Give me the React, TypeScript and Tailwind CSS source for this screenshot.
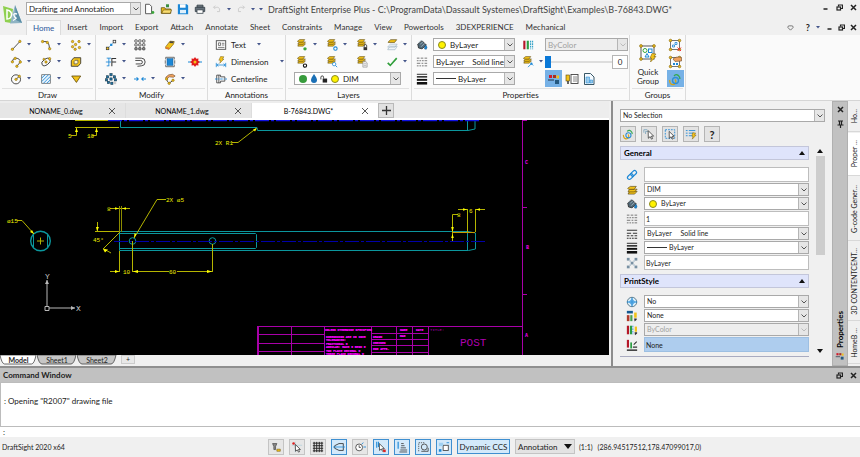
import { useState, type ReactNode } from "react";
import clsx from "clsx";

const Y = "#f2c21a";
const D = "#333333";
const B = "#1b87d6";

function Dot({ x, y, r = 1.4 }: { x: number; y: number; r?: number }) {
  return <circle cx={x} cy={y} r={r} fill={Y} stroke="#7a5c08" strokeWidth={0.6} />;
}

function Layers({ s = 1 }: { s?: number }) {
  return (
    <g transform={`scale(${s})`} fill={Y} stroke="#4b3a08" strokeWidth={0.7}>
      <path d="M3 8.2 5 6.6h8l-3 3.2H2.5z" />
      <path d="M3 5.6 5 4h8l-3 3.2H2.5z" />
      <path d="M2 3 5 .8h7L9.5 4.2H3z" />
    </g>
  );
}

function Nodes({ children }: { children?: ReactNode }) {
  return (
    <g>
      <rect x={2.5} y={2.5} width={9} height={9} fill="none" stroke="#555" strokeWidth={0.8} />
      <Dot x={2.5} y={2.5} r={1.3} /><Dot x={11.5} y={2.5} r={1.3} />
      <Dot x={2.5} y={11.5} r={1.3} /><Dot x={11.5} y={11.5} r={1.3} />
      {children}
    </g>
  );
}

const icons: Record<string, ReactNode> = {
  line: <><path d="M3 12 11.5 3" stroke={D} /><Dot x={2.8} y={12} /><Dot x={11.5} y={2.8} /></>,
  arc: <><path d="M3 3h4q4 1 4 8.5" fill="none" stroke={D} /><Dot x={3} y={3} /><Dot x={8.5} y={4} /><Dot x={11.3} y={11.4} /></>,
  points: <><Dot x={3} y={3} /><Dot x={10.5} y={3} /><Dot x={6.5} y={6.4} /><Dot x={3} y={9} /><Dot x={11} y={10} /><Dot x={6} y={12} /></>,
  polyarc: <><path d="M2.5 7Q3 2.5 7 2.5 12 3 12 7L8 12" fill="none" stroke={D} /><Dot x={2.8} y={6.8} /><Dot x={6} y={2.8} /><Dot x={12} y={7} /><Dot x={8} y={12} /></>,
  ellipse: <><ellipse cx={7} cy={7} rx={5.5} ry={3.4} transform="rotate(-35 7 7)" fill="none" stroke={D} /><Dot x={7} y={7} /><Dot x={11.2} y={3.2} /><Dot x={4.6} y={3.8} r={1.2} /></>,
  region: <><path d="M4.5 2H12.500v6.500L9.500 12H1.500V5.500z" fill={Y} stroke={D} strokeWidth={1} /><path d="M6 5h3.200v2.600L8 9.200H4.800V6.400z" fill="#fff4c4" stroke={D} strokeWidth={0.7} /></>,
  circle: <><circle cx={7} cy={7.4} r={5.3} fill="none" stroke={D} /><path d="m7 7.4 3.5-3.2" stroke={D} /><Dot x={7} y={7.4} /><Dot x={10.8} y={3.8} /></>,
  hatch: <><rect x={2} y={2} width={10} height={10} fill="#e8f4fd" stroke="#555" strokeWidth={0.8} /><path d="m2 6 4-4M2 10l8-8M4 12l8-8M8 12l4-4" stroke={B} /></>,
  triangle: <path d="M2 3.5h10.5L7.5 11z" fill={Y} stroke="#574205" strokeWidth={0.9} />,

  copyPt: <><path d="m3 11 7.5-7.5" stroke={B} strokeDasharray="2 1" /><rect x={1.5} y={9.5} width={3} height={3} fill={Y} stroke={D} strokeWidth={0.8} /><rect x={9.5} y={1.5} width={3} height={3} fill="#fff" stroke={D} strokeWidth={0.9} /><rect x={6} y={5.5} width={2.6} height={2.6} fill={B} /></>,
  array: <g fill="none" stroke="#444" strokeWidth={1}>{[1, 5.5, 10].map((y) => [1, 5.5, 10].map((x) => <rect key={`${x}-${y}`} x={x} y={y} width={2.7} height={2.7} rx={0.5} fill={y === 10 ? "#999" : "none"} />))}</g>,
  erase: <><path d="m2 9 5-6.5 5 .5-1 3-5 6-4-1z" fill={Y} stroke="#6b5209" strokeWidth={0.7} /><path d="m2 9.2 4 .6v2.4l-4-1.2z" fill="#e07a2b" /><path d="m7 2.5 4.5.5-1 2-4.2-.4z" fill="#444" /></>,
  trim: <><path d="M2 2.5h5M4.5 2.5v9M2 11.5h3M1 7h6" stroke={B} fill="none" /><path d="M8 12V3h5M8 7h5" fill="none" stroke={D} strokeWidth={1.2} /></>,
  offset: <path d="M1.500 2.500h7a4 4 0 0 1 0 9L4 12M1.500 5.200h6.300a1.800 1.800 0 0 1 0 4L2 9.300" fill="none" stroke="#444" strokeWidth={1.1} />,
  solid: <><rect x={3.5} y={3} width={7} height={8} fill={B} stroke="#1b5d92" strokeWidth={0.6} /><path d="M2 4V1.5h10V4M2 10v2.5h10V10M1.5 5v4M12.5 5v4" fill="none" stroke="#4a4a4a" strokeWidth={0.9} /></>,
  explode: <><path d="M0 7h3M11 7h3" stroke={B} strokeWidth={1.2} /><path d="m7 2 1.2 1.8 2.3-.3-.3 2.3L12 7l-1.8 1.2.3 2.3-2.3-.3L7 12l-1.2-1.8-2.3.3.3-2.3L2 7l1.8-1.2-.3-2.3 2.3.3z" fill="#e21a1a" /><circle cx={7} cy={7} r={1.5} fill={Y} /></>,
  pattern: <g fill="#2277a8" stroke="#17384c" strokeWidth={0.7}>{[[7, 2], [3, 4.5], [11, 4.5], [1.8, 8], [12.2, 8], [4, 11], [8, 12], [7, 7]].map(([x, y]) => <rect key={`${x}-${y}`} x={x - 1.3} y={y - 1.3} width={2.6} height={2.6} />)}<rect x={10} y={10} width={3} height={3} fill="#ccc" stroke="none" /></g>,
  stretch: <path d="M0 7h5M3 5l2 2-2 2M14 7H9M11 5 9 7l2 2" fill="none" stroke={B} strokeWidth={1.2} />,
  editPl: <><path d="M2 5Q5 1 10 1.5l3 2-2 1.5-5-.5L3.5 7z" fill="#f0a15e" stroke="#6b4a28" strokeWidth={0.7} /><path d="M3 6q0 4 3 6M6 12l4-3" fill="none" stroke={D} /><Dot x={3} y={7} /><Dot x={6} y={12} /><Dot x={10.5} y={8.5} /></>,

  text: <><rect x={1.5} y={2} width={11} height={10} fill="#fff" stroke="#444" strokeWidth={1} /><path d="M4 4.500h2.500v3H4zM8 5h3M8 7h3M3.500 9.800h7.500" fill="none" stroke="#444" strokeWidth={0.8} /></>,
  dim: <><path d="M1.5 8v5M12.5 8v5M2 10.5h10M4 9l-2 1.5L4 12M10 9l2 1.5L10 12" fill="none" stroke={B} strokeWidth={0.9} /><path d="m6.5.5 4 .5-2 2.500h2L5.500 8.500l1-3.500H4.500z" fill={Y} stroke="#6b5209" strokeWidth={0.5} /></>,
  center: <><path d="M2 2.5h4.500v2h5v5h-5v2H2zM4.500 2.500v9" fill="none" stroke="#444" strokeWidth={1} /><path d="M0 7h14" stroke={B} strokeDasharray="3 1 1 1" /></>,

  layOn: <><Layers s={0.85} /><circle cx={10.5} cy={11.5} r={2} fill="#3aa63a" /></>,
  layFreeze: <><Layers s={0.85} /><circle cx={11} cy={11.2} r={2} fill="#fff" stroke={B} strokeWidth={1.2} /></>,
  layLock: <><Layers s={0.85} /><path d="M9.5 9.5V8a1.5 1.5 0 0 1 3 0v1.5" fill="none" stroke={D} /><rect x={8.8} y={9.5} width={4.2} height={3.5} fill={D} /></>,
  layTop: <><g transform="translate(0 5)" opacity={0.55}><path d="M3 5.5 5 3.5h8l-2.5 4H2zM3 3 5 1h8l-2.5 3.5H2z" fill="#e7f0f7" stroke="#4b7594" strokeWidth={0.7} /></g><path d="M3 3 5.5.8h7L10 4H2.5z" fill={Y} stroke="#4b3a08" strokeWidth={0.7} /></>,
  layOff: <><Layers s={0.85} /><circle cx={10.5} cy={11.2} r={1.9} fill="#fff" stroke="#111" strokeWidth={1.3} /></>,
  layFind: <><Layers s={0.85} /><circle cx={9.5} cy={9.5} r={2} fill="#fff" stroke={B} strokeWidth={0.9} /><path d="m11 11 2 2" stroke={B} /></>,
  layDoc: <><Layers s={0.85} /><path d="M8 6.5h3.5L13 8v5H8z" fill="#eee" stroke="#888" strokeWidth={0.7} /><path d="M9 9h3M9 11h3" stroke="#999" strokeWidth={0.6} /></>,
  check: <path d="m2 8 3 3 7.5-8.5" fill="none" stroke="#2f9e3a" strokeWidth={1.9} />,
  layCur: <><Layers s={0.85} /><path d="m7 13 4-4 2 2" fill="none" stroke={B} /><circle cx={11} cy={9} r={1.3} fill={B} /></>,
  layers: <g transform="translate(0 2)"><Layers /></g>,

  paint: <><path d="M2 6 7 2l5 5-5 4.5-4-1z" fill="#516876" stroke="#222" strokeWidth={0.9} /><path d="M3 5Q4 1 7.5 2M5 6l3-2.5M6 9l4-4" fill="none" stroke="#b9cdd9" strokeWidth={0.8} /><path d="M11.5 7q2.500 3 .5 5-3 .5-2-2.500z" fill={B} stroke="#174f77" strokeWidth={0.5} /></>,
  dashes: <path d="M1 2.5h3M5.5 2.5h3M10 2.5h3M1 5.5h2M4 5.5h2M7 5.5h2M10 5.5h3M1 8.5h4M6.5 8.5h2M10 8.5h3M1 11.5h2M4 11.5h2M7 11.5h2M10 11.5h3" stroke="#666" strokeWidth={1} />,
  linetype: <path d="M1 2.5h12M1 6h5M8 6h5M1 9h3M5.5 9h3M10 9h3M1 12h2M4 12h2M7 12h2M10 12h3" stroke="#333" strokeWidth={1.2} />,
  weights: <><path d="M1 1.500h12" stroke="#111" strokeWidth={1} /><path d="M1 4.500h12" stroke="#111" strokeWidth={1.600} /><path d="M1 8h12" stroke="#111" strokeWidth={2.200} /><path d="M1 12h12" stroke="#111" strokeWidth={3} /></>,
  transp: <g fill="#7890a3">{[[1, 1], [10, 1], [5.5, 5.5], [1, 10], [10, 10]].map(([x, y]) => <rect key={`${x}-${y}`} x={x} y={y} width={3.2} height={3.2} />)}<g fill="#b3c4d1"><rect x={4} y={3.8} width={1.8} height={1.8} /><rect x={8.5} y={3.8} width={1.8} height={1.8} /><rect x={4} y={8.5} width={1.8} height={1.8} /><rect x={8.5} y={8.5} width={1.8} height={1.8} /></g></g>,
  bars: <><rect x={1.5} y={2} width={2.5} height={10} fill="#b51728" /><rect x={5.5} y={2} width={2.5} height={10} fill="#2c9e42" /><path d="M10 2v10M12.300 2v10" stroke="#36a3c8" strokeWidth={1.400} strokeDasharray="2 1" /></>,
  palette: <><rect x={2} y={3} width={3} height={3} fill="#d11a2a" /><rect x={6} y={3} width={3} height={3} fill="#a8301f" /><rect x={9.5} y={3.5} width={2.5} height={3} fill={Y} /><path d="M1 8h6" stroke="#234" /><rect x={8} y={8} width={4} height={4} fill="#24587f" /></>,
  cells: <><rect x={1} y={3} width={3.5} height={6} fill={Y} stroke="#5b4608" strokeWidth={0.6} /><path d="M3 9v3" stroke={D} strokeWidth={1.5} /><rect x={6} y={2.5} width={7} height={9} fill="#fff" stroke="#444" strokeWidth={0.9} /><path d="M8 5h4M8 7h4M8 9h4" stroke="#888" /></>,
  doc: <><path d="M2.5 1.5h6l3.5 3.5v7.5h-9.5z" fill="#f4faff" stroke="#245" strokeWidth={0.9} /><path d="M4 5h3.5v6H4zM8 8h2.5v3H8z" fill="#9ccbea" stroke={B} strokeWidth={0.5} /></>,

  grpDel: <Nodes><path d="M4.5 7h2v2h-2zM7 4.5h2v2H7z" fill="#fff" stroke={B} strokeWidth={0.8} /><path d="m9.5 9.5 3.5 3.5M13 9.5 9.5 13" stroke="#e33" /></Nodes>,
  grpEdit: <Nodes><path d="M5 8h2v2H5zM8 8h2v2H8z" fill={B} /><path d="M5 4Q8 1 13.5 2.500v3.500l-6.500.5z" fill="#f0a15e" stroke="#6b4a28" strokeWidth={0.6} /></Nodes>,
  refresh: <><path d="M2 10.5a3 3 0 1 0 5-3M2 10.5 1.5 8" fill="none" stroke="#d8a511" strokeWidth={1.3} /><circle cx={7.5} cy={8.5} r={3} fill="none" stroke="#2f8fd0" strokeWidth={1.3} /><path d="M6 4q3-3 5.5 1L12 7" fill="none" stroke="#36a853" strokeWidth={1.3} /></>,

  link: <g fill="none" stroke={B} strokeWidth={1.4} transform="rotate(-45 7 7)"><rect x={0.5} y={4.8} width={7.5} height={4.4} rx={2.2} /><rect x={6} y={4.8} width={7.5} height={4.4} rx={2.2} /></g>,
  pick: <><path d="M1 5.500V2h4M3 7V4h3" stroke="#7fa6bd" fill="none" /><path d="m6 3 .2 9 2.2-2 1.500 3 1.300-.7L9.800 9.500h2.600z" fill="#fff" stroke="#333" strokeWidth={0.9} /></>,
  selectBox: <><rect x={1.5} y={2} width={11} height={10} fill="none" stroke={B} strokeDasharray="2 1.3" /><path d="m6 4 .2 8 2-1.700 1.500 2.700 1.200-.6-1.400-2.700h2.400z" fill="#fff" stroke="#333" strokeWidth={0.9} /></>,
  filter: <><path d="M1 3h2M4.5 3H12M1 6h2M4.5 6H10M1 9h2M4.5 9H8" stroke={B} /><path d="m9 5.5 3.5.4L11 8.200h2L8.500 13l.8-3.500H8z" fill={Y} stroke="#6b5209" strokeWidth={0.5} /></>,
  globe: <><circle cx={7} cy={7} r={5.5} fill="#dff1fb" stroke="#4a6a7c" strokeWidth={1} /><path d="M7 2v10M1 7h12" stroke={B} strokeWidth={1.3} /><circle cx={7} cy={7} r={2.5} fill="none" stroke={B} strokeWidth={0.8} /></>,
  printTab: <><rect x={1} y={1} width={7} height={3} fill="#165b92" /><rect x={1} y={6} width={3} height={7} fill="#b03a2a" /><rect x={5} y={6} width={2.5} height={7} fill="#49a14f" /><path d="M11 3v6" stroke={Y} strokeWidth={3} /><path d="M9.5 10h3v1.5L10 13.5z" fill="#333" /></>,
  printCol: <><rect x={1} y={2} width={2.5} height={10} fill="#b51728" /><rect x={4.5} y={2} width={2.5} height={10} fill="#2c9e42" /><path d="M8 2v10" stroke={B} strokeDasharray="2 1" /><path d="M11.5 3v6" stroke={Y} strokeWidth={2.6} /><path d="M10 9.5h3V11l-2.5 2z" fill="#333" /></>,
  printNone: <><rect x={1} y={1} width={2.5} height={9} fill="#b51728" /><path d="M1 13h12" stroke="#222" strokeWidth={1.6} /><rect x={5} y={4} width={2} height={7} fill="#2c9e42" /><path d="M9 6.5 12.5 3M8 9.500h5" stroke="#333" strokeWidth={1.3} /></>,

  newDoc: <><path d="M3 1.5h4.5L10 4v8.5H3z" fill="#fff" stroke="#444" strokeWidth={1} /><circle cx={11.500} cy={11} r={1.7} fill="#3aa63a" /></>,
  open: <><path d="M1.5 12V5.5h4l1 1.5h6V12z" fill={Y} stroke="#5b4608" strokeWidth={0.9} /><path d="M7 5V1.500h3.500V5z" fill="#3c8f3f" /><path d="M2 12 4 8h9.500L12 12z" fill="#f9dc70" stroke="#5b4608" strokeWidth={0.7} /></>,
  save: <><path d="M1 1.500h10.500L13 3v10H1z" fill={B} /><rect x={3.500} y={1.500} width={6.500} height={4} fill="#fff" /><rect x={3.500} y={8} width={7} height={4} fill="#dff0fb" /></>,
  print: <><path d="M3.5 5V2.500h7V5M1.500 5h11v5h-11z" fill="#66727b" stroke="#37424a" strokeWidth={1} /><rect x={3.5} y={8} width={7} height={4} fill="#fff" stroke="#37424a" strokeWidth={0.9} /></>,
  undo: <path d="M5 3 3 5l2 2M3 5h5q3 .5 2 5H7" fill="none" stroke="#cdcdcd" strokeWidth={1.1} />,
  redo: <path d="m9 3 2 2-2 2M11 5H6Q3 5.5 4 10h3" fill="none" stroke="#cdcdcd" strokeWidth={1.1} />,

  stFilter: <><path d="M3 3h5L6.5 6.5V10h-2V6.5z" fill="#888" stroke="#444" strokeWidth={0.8} /><path d="M8 9.5h4V12H8z" fill={Y} stroke="#6b5209" strokeWidth={0.6} /></>,
  stSnap: <><path d="M1 5h12M5 1v12" stroke="#a7ccd9" strokeWidth={0.7} /><circle cx={3} cy={3} r={1.5} fill="#d22" /><path d="m5 4 .3 8 2-1.700L8.800 13l1.200-.6-1.300-2.500H11z" fill="#fff" stroke="#333" strokeWidth={0.9} /></>,
  stGrid: <path d="M2.5 1v12M5.5 1v12M8.5 1v12M11.5 1v12M1 2.5h12M1 5.5h12M1 8.5h12M1 11.5h12" stroke="#222" strokeWidth={1.1} />,
  stOrtho: <><path d="M12 3v8H7L2 8.500v-3L7 3z" fill="none" stroke="#333" strokeWidth={1} /><path d="M0 7h14" stroke={B} strokeWidth={0.9} /></>,
  stPolar: <><circle cx={6} cy={7.5} r={4} fill="#fff" stroke="#444" strokeWidth={1} /><path d="M6 7.5V5M6 7.5h2" stroke="#444" /><path d="M9 3.5 11 2M11 7h3" stroke={B} /></>,
  stEsnap: <><path d="M2 1v7M4 1v6" stroke={B} strokeWidth={1.2} /><path d="m5 3 .3 8 2-1.700L8.800 12l1.200-.6-1.300-2.500H11z" fill="#fff" stroke="#333" strokeWidth={0.9} /><rect x={9.5} y={10} width={3} height={3} fill="#d22" /></>,
  stTrack: <><path d="M2.5 1v8" stroke={B} strokeWidth={1.3} /><path d="M6 3h3M6 5.5h4M5.5 8h6M5 10.5h8M4 12.8h9" stroke="#444" strokeWidth={1} /></>,
  stCycle: <><path d="M2 12V2h7" fill="none" stroke="#555" strokeDasharray="1.5 1" /><circle cx={8.5} cy={7} r={3.5} fill="none" stroke="#444" /><path d="M5 12h8V8" fill="none" stroke="#444" /></>,
  stUcs: <><rect x={6} y={5} width={6} height={6} fill="#fff" stroke="#444" strokeWidth={1} /><path d="M1 2h5v4H1z" fill="#9fd0f2" /><rect x={1} y={9.5} width={3} height={3} fill={B} /><path d="M10 2h3" stroke={B} /></>,
};

function Icon({ name, className = "size-3.5" }: { name: string; className?: string }) {
  return <svg viewBox="0 0 14 14" className={clsx("shrink-0", className)} aria-hidden="true">{icons[name]}</svg>;
}

function Caret() {
  return <svg viewBox="0 0 4 3" className="h-[3px] w-1 shrink-0" aria-hidden="true"><path d="M0 0h4L2 2.5z" fill="#44558a" /></svg>;
}

function Tool({ icon, label, caret }: { icon: string; label: string; caret?: boolean }) {
  return (
    <button aria-label={label} className="flex h-[17px] w-[30px] items-center hover:bg-sky-100">
      <span className="flex w-[23px] justify-center"><Icon name={icon} className="size-3" /></span>
      {caret && <Caret />}
    </button>
  );
}

type DropdownProps = { label: string; value: string; children?: ReactNode; disabled?: boolean; className?: string };

function Dropdown({ label, value, children, disabled, className }: DropdownProps) {
  return (
    <span className={clsx("flex h-[13px] items-center border border-[#a9a9a9] pl-[2px]", disabled ? "bg-[#eeeeee] text-[#a0a0a0]" : "bg-white", className)}>
      {children}
      <select aria-label={label} disabled={disabled} className="h-full min-w-0 flex-1 appearance-none bg-transparent leading-none opacity-100 outline-none">
        <option>{value}</option>
      </select>
      <span className="flex h-full w-[10px] shrink-0 items-center justify-center border-l border-[#b5b5b5] bg-[#e6e6e6]">
        <svg viewBox="0 0 6 4" className="h-1 w-1.5" aria-hidden="true"><path d="M.5.5 3 3 5.5.5" fill="none" stroke={disabled ? "#bbb" : "#555"} /></svg>
      </span>
    </span>
  );
}

const YellowDot = () => <span className="mr-1 ml-0.5 size-2 shrink-0 rounded-full border border-[#8a8a20] bg-[#fff200]" />;

function Group({ title, children, className }: { title: string; children: ReactNode; className?: string }) {
  return (
    <section aria-label={title} className={clsx("flex shrink-0 flex-col border-r border-[#dcdcdc]", className)}>
      <div className="h-[53px] pt-[1px]">{children}</div>
      <div className="mx-0.5 flex h-3 items-center justify-center border-t border-[#e2e2e2]">{title}</div>
    </section>
  );
}

function WindowGlyph({ kind }: { kind: "min" | "restore" | "close" }) {
  return (
    <button aria-label={kind} className="flex size-2.5 items-center justify-center">
      <svg viewBox="0 0 7 7" className="size-[7px]" fill="none" stroke="#222" aria-hidden="true">
        {kind === "min" && <path d="M1.5 5h4" strokeWidth={1.5} />}
        {kind === "restore" && <><path d="M2.5 2.5V1h4v3.5H5" strokeWidth={1.2} /><rect x={1} y={3} width={3.5} height={3} strokeWidth={1.2} /></>}
        {kind === "close" && <path d="m1 1 5 5M6 1 1 6" strokeWidth={1.5} />}
      </svg>
    </button>
  );
}

const menu = ["Home", "Insert", "Import", "Export", "Attach", "Annotate", "Sheet", "Constraints", "Manage", "View", "Powertools", "3DEXPERIENCE", "Mechanical"];

function Header() {
  return (
    <header className="flex h-[35px] bg-[#f0f0f0]">
      <div className="flex w-[26px] shrink-0 pt-1 pl-[3px]">
        <svg viewBox="0 0 20 21" className="h-[21px] w-5" aria-label="DraftSight">
          <path d="M0 2 10 5 8 19 2 18z" fill="#8fd04f" />
          <path d="m12 1 7 18-12 .5z" fill="#8fb4c4" />
          <path d="m12 1 7 18-6-3z" fill="#5a8ea6" />
          <path d="M4 6q5 1 4.5 5T4 15z" fill="none" stroke="#fff" strokeWidth={1.5} />
          <path d="M14 10q-4-1-3 1.5t2 2.5-3 2.5" fill="none" stroke="#fff" strokeWidth={1.3} />
        </svg>
      </div>
      <div className="flex min-w-0 flex-1 flex-col">
        <div className="flex h-5 items-start pt-[2px]">
          <Dropdown label="Workspace" value="Drafting and Annotation" className="w-[115px] shrink-0" />
          <div className="flex h-[14px] shrink-0 items-center gap-[5px] pl-0.5">
            {["newDoc", "open", "save", "print"].map((n) => (
              <button key={n} aria-label={n}><Icon name={n} className="size-3" /></button>
            ))}
            <span className="flex items-center gap-[4px]">
              <button aria-label="undo"><Icon name="undo" className="size-3" /></button>
              <Caret />
              <button aria-label="redo"><Icon name="redo" className="size-3" /></button>
              <Caret /><Caret />
            </span>
          </div>
          <h1 className="min-w-0 flex-1 truncate pl-[5px] text-[9px] leading-[15px] text-[#444]">
            DraftSight Enterprise Plus - C:\ProgramData\Dassault Systemes\DraftSight\Examples\B-76843.DWG*
          </h1>
          <div className="flex gap-1 pr-[2px]">
            <WindowGlyph kind="min" /><WindowGlyph kind="restore" /><WindowGlyph kind="close" />
          </div>
        </div>
        <div className="flex h-[15px] items-stretch">
          <nav className="flex flex-1">
            {menu.map((m, i) => (
              <button key={m} className={clsx("shrink-0 px-[6px] leading-[15px]", i === 0 ? "border-x border-t border-[#dcdcdc] bg-[#fafafa] text-[#2b579a]" : "text-[#333]")}>{m}</button>
            ))}
          </nav>
          <div className="flex items-center gap-[2px] pr-0.5">
            <svg viewBox="0 0 8 7" className="mr-2 h-[6px] w-[7px]" aria-hidden="true"><path d="M4 6 1 3q-.5-2 1.5-2h3q2 0 1.500 2z" fill="none" stroke="#666" /></svg>
            <button aria-label="Help" className="px-0.5 text-[9px] leading-none font-bold">?</button>
            <button aria-label="More" className="w-2 pl-0.5"><Caret /></button>
            <WindowGlyph kind="min" /><WindowGlyph kind="restore" /><WindowGlyph kind="close" />
          </div>
        </div>
      </div>
    </header>
  );
}

function Ribbon() {
  return (
    <div className="flex h-[66px] overflow-hidden border-b border-[#d5d5d5] bg-[#fafafa]">
      <Group title="Draw" className="w-[96px]">
        <div className="grid grid-cols-[30px_30px_30px] pl-[4px]">
          <Tool icon="line" label="Line" caret /><Tool icon="arc" label="Arc" caret /><Tool icon="points" label="Points" caret />
          <Tool icon="polyarc" label="Polyline" caret /><Tool icon="ellipse" label="Ellipse" caret /><Tool icon="region" label="Region" />
          <Tool icon="circle" label="Circle" caret /><Tool icon="hatch" label="Hatch" caret /><Tool icon="triangle" label="Solid" />
        </div>
      </Group>
      <Group title="Modify" className="w-[112px]">
        <div className="grid grid-cols-[29px_30px_30px_18px] pl-[3px]">
          <Tool icon="copyPt" label="Copy" caret /><Tool icon="array" label="Array" /><Tool icon="erase" label="Delete" caret /><span />
          <Tool icon="trim" label="Trim" caret /><Tool icon="offset" label="Offset" /><Tool icon="solid" label="Scale" />
          <button aria-label="Explode" className="flex items-center"><Icon name="explode" /></button>
          <Tool icon="pattern" label="Pattern" caret /><Tool icon="stretch" label="Stretch" caret /><Tool icon="editPl" label="Edit polyline" caret /><span />
        </div>
      </Group>
      <Group title="Annotations" className="w-[78px]">
        {[["text", "Text", "gap-[11px]"], ["dim", "Dimension", "gap-[11px]"], ["center", "Centerline", ""]].map(([icon, label, gap]) => (
          <button key={label} className={clsx("flex h-[17px] items-center pl-[7px]", gap)}>
            <span className="flex items-center gap-[4px]"><Icon name={icon} className="size-3" />{label}</span>
            {gap && <Caret />}
          </button>
        ))}
      </Group>
      <Group title="Layers" className="w-[126px]">
        <div className="grid grid-cols-[30px_30px_30px_30px] pl-[4px]">
          <Tool icon="layOn" label="Show layer" caret /><Tool icon="layFreeze" label="Freeze layer" caret /><Tool icon="layLock" label="Lock layer" caret /><Tool icon="layTop" label="Isolate layer" caret />
          <Tool icon="layOff" label="Hide layer" /><Tool icon="layFind" label="Preview layer" /><Tool icon="layDoc" label="Layer states" /><Tool icon="check" label="Activate layer" caret />
        </div>
        <div className="pt-0.5 pr-[10px] pl-2">
          <Dropdown label="Active layer" value="DIM">
            <span className="mx-0.5 size-2 rounded-full bg-[#379b3c]" />
            <svg viewBox="0 0 8 9" className="mx-[1px] h-[9px] w-2" aria-hidden="true"><path d="M4 0Q7 4 7 6a3 3 0 0 1-6 0q0-2 3-6" fill="#1a6fb5" /></svg>
            <svg viewBox="0 0 9 9" className="mx-[1px] size-2" aria-hidden="true"><path d="M1 5V2.5a1.5 1.5 0 0 1 3 0V4" fill="none" stroke="#333" /><rect x={3} y={4} width={5} height={4.5} fill="#222" /></svg>
            <YellowDot />
          </Dropdown>
        </div>
      </Group>
      <Group title="Properties" className="w-[218px]">
        <div className="grid grid-cols-[16px_82px_28px_83px] gap-x-[1px] pl-[4px]">
          <div className="flex h-[17px] items-center"><Icon name="paint" className="size-3" /></div>
          <div className="flex h-[17px] items-center"><Dropdown label="Line color" value="ByLayer" className="w-full"><YellowDot /></Dropdown></div>
          <Tool icon="bars" label="Print style" />
          <div className="flex h-[17px] items-center"><Dropdown label="Print color" value="ByColor" disabled className="w-full" /></div>

          <div className="flex h-[17px] items-center"><Icon name="dashes" className="size-3" /></div>
          <div className="flex h-[17px] items-center"><Dropdown label="Line style" value={"ByLayer\u00a0\u00a0\u00a0\u00a0Solid line"} className="w-full" /></div>
          <Tool icon="layCur" label="Match layer" caret />
          <div className="flex h-[17px] items-center">
            <span className="relative flex h-3 flex-1 items-center">
              <span className="h-[2px] w-full bg-[#dddddd]" />
              <span className="absolute left-0 h-3 w-[6px] bg-[#0a78d7]" />
              <input type="range" aria-label="Transparency" defaultValue={0} className="absolute inset-0 w-full opacity-0" />
            </span>
            <input aria-label="Transparency value" defaultValue="0" className="h-[14px] w-4 border border-[#b5b5b5] bg-white text-center" />
          </div>

          <div className="flex h-[17px] items-center"><Icon name="weights" className="size-3" /></div>
          <div className="flex h-[17px] items-center"><Dropdown label="Line weight" value="ByLayer" className="w-full"><span className="mr-0.5 h-px w-5 bg-[#333]" /></Dropdown></div>
          <span />
          <div className="flex h-[17px] items-center gap-[3px]">
            <button aria-label="Properties palette" className="flex size-[17px] items-center justify-center bg-[#76b1e6]"><Icon name="palette" /></button>
            <button aria-label="Block attributes"><Icon name="cells" /></button>
            <button aria-label="Design resources"><Icon name="doc" /></button>
          </div>
        </div>
      </Group>
      <Group title="Groups" className="w-[56px]">
        <div className="flex justify-between px-[1px]">
          <button className="flex w-[34px] flex-col items-center pt-2 leading-[9px]">
            <svg viewBox="0 0 18 19" className="mb-[5px] h-[19px] w-[18px]" aria-hidden="true">
              <rect x={2} y={2} width={13} height={13} fill="#fff" stroke="#555" />
              <Dot x={2} y={2} /><Dot x={15} y={2} /><Dot x={2} y={15} />
              <circle cx={6} cy={6.5} r={2} fill="none" stroke="#3aa63a" /><rect x={9.5} y={5} width={3.5} height={3.5} fill="none" stroke={B} /><path d="m6 13 2-3.5 2 3.5z" fill="none" stroke={B} />
              <path d="m13 9.5 4 .5-2 2.500h2L11.500 18l1-4H11z" fill={Y} stroke="#6b5209" strokeWidth={0.5} />
            </svg>
            <span>Quick<br />Group</span>
          </button>
          <div className="flex w-[18px] flex-col items-center">
            <button aria-label="Ungroup" className="h-[17px]"><Icon name="grpDel" /></button>
            <button aria-label="Edit group" className="h-[17px]"><Icon name="grpEdit" /></button>
            <button aria-label="Group selection" className="flex size-[17px] items-center justify-center bg-[#76b1e6]"><Icon name="refresh" /></button>
          </div>
        </div>
      </Group>
    </div>
  );
}

function DocTabs() {
  const [active, setActive] = useState(2);
  return (
    <div className="flex h-[19px] border-b-2 border-white bg-[#ededed] pt-[2px] text-[7px]">
      {["NONAME_0.dwg", "NONAME_1.dwg", "B-76843.DWG*"].map((name, i) => (
        <div key={name} className={clsx("flex w-[126px] items-center pr-[9px]", i === active ? "bg-white" : "border-r border-[#dddddd] bg-[#e6e6e6]")}>
          <button onClick={() => setActive(i)} className="flex-1 pl-1 text-center text-black">{name}</button>
          <button aria-label={`Close ${name}`}>
            <svg viewBox="0 0 8 8" className="size-2" aria-hidden="true"><path d="m1 1 6 6M7 1 1 7" stroke="#444" strokeWidth={0.9} /></svg>
          </button>
        </div>
      ))}
      <button aria-label="New drawing" className="flex h-[15px] w-4 items-center justify-center border border-[#b9b9b9] bg-[#e1e1e1]">
        <svg viewBox="0 0 9 9" className="size-[9px]" aria-hidden="true"><path d="M4.5 0v9M0 4.5h9" stroke="#333" strokeWidth={1.3} /></svg>
      </button>
    </div>
  );
}

function Drawing() {
  return (
    <svg viewBox="0 120 609 235" preserveAspectRatio="xMinYMin slice" className="min-h-0 w-full flex-1 bg-black font-['Liberation_Mono',monospace]" role="img" aria-label="B-76843 drawing">
      <g fill="none" stroke="#0b979d" strokeWidth={1}>
        <path d="M120.5 120v7.5H257l.5 3H468l7-1.5V120M467.5 120v10.5" />
        <path d="M119.5 231.5H468l7.5 1.5v16l-7 1.5h-349zM467.5 231.5v19" />
        <path d="M120 233.5h135.5l1 1v13l-1 1H120" />
        <circle cx={40.5} cy={241} r={9.8} strokeWidth={1.4} />
        <path d="M33.5 235v12M47.5 235v12" />
        <circle cx={132.5} cy={241} r={3.3} /><circle cx={212.5} cy={241} r={3.3} />
      </g>
      <g stroke="#1010e0" strokeDasharray="14 2 3 2">
        <path d="M108 120.5h371" strokeWidth={1.5} /><path d="M114 241.5h371" stroke="#0000a8" />
      </g>
      <g fill="none" stroke="#b5b500" strokeWidth={1}>
        <path d="M75 120.5h33M75 127.5h44M76.5 128v7.5H71M96.5 128v7.5H92M256 128.5l-18 14h-6" />
        <path d="M166 199.5h-9L134 238M17 220.5h5L34 234M37 241h7M40.5 237.5v7" />
        <path d="M110 208.5h20M95 231.5h24M97.5 222v9M120 232l-17 17M104 249l7 4" />
        <path d="M119.5 206v26M121.5 206v26" stroke="#8c8c00" />
        <path d="M119.5 251v21M132.5 241v31M212.5 244v28M110 271.5h9M133 271.5h36M177 271.5h35" />
        <path d="M467.5 209v23M475.5 209v23M458 209.5h9M476 209.5h9M458 214.5h-5.5V241" />
        <path d="M452 232.5h23" stroke="#c89a00" />
      </g>
      <g fill="#ffff00">
        <path d="m76.5 128-1.500 4h3zM96.500 128l-1.500 4h3zM257 128l-4 1.500 2 2zM34 234l-4-2 2-2zM134 238l.5-5 2 1.500zM119 208.500l-4-1.300v2.600zM122 208.500l4-1.300v2.600zM97 231l-1-4h3zM103 249l5 .5-3 3zM119 271.500l-4-1.500v3zM133 271.500l5-1.500v3zM212 271.500l-5-1.500v3zM467 209.500l-4-1.300v2.600zM476 209.500l4-1.300v2.600zM452.500 232l-1.300-5h2.600zM452.500 234l-1.300 4h2.600z" />
      </g>
      <g fill="#f0f000" fontSize={6}>
        <text x={68} y={138}>5</text><text x={87} y={138}>10</text><text x={215} y={145}>2X R1</text>
        <text x={166} y={202}>2X ø5</text><text x={107} y={211}>8</text><text x={7} y={223}>ø15</text>
        <text x={93} y={242}>45°</text><text x={123} y={274}>10</text><text x={169} y={274}>60</text>
        <text x={457} y={217}>8</text><text x={469} y={213}>6</text>
      </g>
      <g stroke="#b8b8b8" fill="none">
        <path d="M45 306.5h4v4h-4zM47 306v-26M49 308h26" />
      </g>
      <path d="m47 280-2 4h4zM75 308l-4-2v4z" fill="#b8b8b8" />
      <g fill="#c8c8c8" fontSize={8}><text x={45} y={279}>Y</text><text x={76} y={311}>X</text></g>
      <g stroke="#a800a8" fill="none">
        <path d="M522.5 120v235M523 120.5h4M523 207.5h4M523 294.5h4M257 326.5h265.5" />
        <path d="M257.5 326v29M258.5 326v29M291.5 326v29M324.5 326v29M371.5 326v29M396.5 326v29M412.5 326v29M428.5 326v29" />
        <path d="M258 334.5h66M258 343.5h66M258 351.5h66M371 333.5h57M371 339.5h57M371 345.5h57M371 352.5h57" />
      </g>
      <g fill="#f000f0" fontSize={5} fontWeight="bold">
        <text x={525} y={164}>C</text><text x={526} y={249}>B</text><text x={525} y={337}>A</text>
      </g>
      <g fill="#ff00ff" stroke="#ff00ff" strokeWidth={0.2} fontSize={3} fontWeight="bold">
        <text x={325} y={331}>UNLESS OTHERWISE SPECIFIED</text>
        <text x={326} y={338}>DIMENSIONS ARE IN INCH</text>
        <text x={326} y={341}>TOLERANCES:</text>
        <text x={326} y={345}>FRACTIONAL ±</text>
        <text x={326} y={348}>ANGULAR: MACH ± BEND ±</text>
        <text x={326} y={352}>TWO PLACE DECIMAL ±</text>
        <text x={326} y={355}>THREE PLACE DECIMAL ±</text>
        <text x={373} y={338}>DRAWN</text><text x={373} y={344}>CHECKED</text><text x={373} y={350}>ENG APPR.</text>
        <text x={400} y={331}>NAME</text><text x={416} y={331}>DATE</text><text x={400} y={337}>MAG</text>
      </g>
      <g fill="#b000b0"><text x={430} y={331} fontSize={4}>TITLE:</text><text x={460} y={346} fontSize={11}>POST</text></g>
    </svg>
  );
}

function SheetTabs() {
  return (
    <div className="flex h-[11px] bg-[#f0f0f0] text-[7px] leading-[9px]">
      {["Model", "Sheet1", "Sheet2"].map((name, i) => (
        <button key={name} className={clsx("relative h-[10px]", i === 0 ? "w-[37px] font-bold" : "w-10")}>
          <svg viewBox="0 0 40 10" preserveAspectRatio="none" className="absolute inset-0 size-full" aria-hidden="true">
            <path d="M0 0q2 9 5 9h29q3 0 5-9z" fill={i === 0 ? "#fff" : "#c6c6c6"} stroke="#555" strokeWidth={0.9} />
          </svg>
          <span className="relative">{name}</span>
        </button>
      ))}
      <button aria-label="Add sheet" className="ml-1 flex h-[9px] w-[14px] items-center justify-center border border-[#cccccc] bg-[#e8e8e8]">+</button>
    </div>
  );
}

type Field = { icon: string; label: string; value: string; kind?: "input" | "disabled" | "active"; lead?: "dot" | "line" };

const general: Field[] = [
  { icon: "link", label: "Hyperlink", value: "", kind: "input" },
  { icon: "layers", label: "Layer", value: "DIM" },
  { icon: "paint", label: "Color", value: "ByLayer", lead: "dot" },
  { icon: "dashes", label: "Line scale", value: "1", kind: "input" },
  { icon: "linetype", label: "Line style", value: "ByLayer\u00a0\u00a0\u00a0\u00a0\u00a0Solid line" },
  { icon: "weights", label: "Line weight", value: "ByLayer", lead: "line" },
  { icon: "transp", label: "Transparency", value: "ByLayer", kind: "input" },
];

const printStyle: Field[] = [
  { icon: "globe", label: "Print", value: "No" },
  { icon: "printTab", label: "Print table", value: "None" },
  { icon: "printCol", label: "Print style", value: "ByColor", kind: "disabled" },
  { icon: "printNone", label: "Table type", value: "None", kind: "active" },
];

function FieldList({ title, fields }: { title: string; fields: Field[] }) {
  return (
    <section className="mt-1">
      <button className="flex h-[14px] w-full items-center justify-between border border-[#c3c6da] bg-[#dfe4fb] px-[3px] text-[8px] font-bold text-black">
        {title}
        <svg viewBox="0 0 6 4" className="h-1 w-1.5" aria-hidden="true"><path d="M0 4 3 0l3 4z" fill="#111" /></svg>
      </button>
      <div className="flex flex-col gap-px pt-[7px]">
        {fields.map((f) => (
          <div key={f.label} className="flex items-center pl-[6px]">
            <span className="w-[18px]"><Icon name={f.icon} className="size-3" /></span>
            {f.kind === "input" || f.kind === "active" ? (
              <input aria-label={f.label} defaultValue={f.value} className={clsx("h-[15px] min-w-0 flex-1 border px-[1px]", f.kind === "active" ? "border-[#9dbfe2] bg-[#aecdee]" : "border-[#bdbdbd] bg-white")} />
            ) : (
              <Dropdown label={f.label} value={f.value} disabled={f.kind === "disabled"} className="min-w-0 flex-1">
                {f.lead === "dot" && <YellowDot />}
                {f.lead === "line" && <span className="mr-0.5 h-px w-5 bg-[#333]" />}
              </Dropdown>
            )}
          </div>
        ))}
      </div>
    </section>
  );
}

function PropertiesPanel() {
  return (
    <aside className="flex w-[249px] shrink-0 border-l-2 border-[#8c8c8c] bg-[#f0f0f0] text-[7px]">
      <div className="min-w-0 flex-1 pt-2 pl-[7px]">
        <Dropdown label="Selection" value="No Selection" className="mr-[7px]" />
        <div className="mt-1 flex gap-[5px]">
          {["refresh", "pick", "selectBox", "filter"].map((n) => (
            <button key={n} aria-label={n} className="flex size-4 items-center justify-center border border-[#b4b4b4] bg-[#e3e3e3]"><Icon name={n} className="size-3" /></button>
          ))}
          <button aria-label="Help" className="flex size-4 items-center justify-center border border-[#b4b4b4] bg-[#e3e3e3] text-[11px] leading-none font-bold">?</button>
        </div>
        <div className="flex">
          <div className="min-w-0 flex-1">
            <FieldList title="General" fields={general} />
            <FieldList title="PrintStyle" fields={printStyle} />
            <div className="mt-1 h-px bg-[#a9abc0]" />
          </div>
          <div className="mr-[7px] ml-[6px] flex w-[10px] flex-col items-center pt-[7px]">
            <svg viewBox="0 0 6 4" className="h-1 w-1.5" aria-hidden="true"><path d="M0 4 3 0l3 4z" fill="#111" /></svg>
            <div className="mt-[3px] h-[99px] w-[9px] bg-[#cdcdcd]" />
            <svg viewBox="0 0 6 4" className="mt-auto mb-1 h-1 w-1.5" aria-hidden="true"><path d="M0 0h6L3 4z" fill="#111" /></svg>
          </div>
        </div>
      </div>
      <div className="flex w-4 flex-col items-center border border-[#b0b0b0] bg-[#c1c1c1] pt-[2px] pb-1">
        <WindowGlyph kind="close" />
        <button aria-label="Pin" className="mt-[6px]">
          <svg viewBox="0 0 7 8" className="h-2 w-[7px]" aria-hidden="true"><path d="M1 1h5M2.5 1v4M4.5 1v4M.5 5h6M3.5 5v3" stroke="#222" strokeWidth={1.2} fill="none" /></svg>
        </button>
        <span className="mt-auto rotate-180 text-[8px] leading-[10px] font-bold text-black [writing-mode:vertical-rl]">Properties</span>
        <Icon name="palette" className="mt-[3px] size-2.5" />
      </div>
      <nav className="flex w-3 flex-col items-center gap-px bg-[#f0f0f0] leading-[10px]">
        {[["Ho...", "h-[31px]"], ["Proper ...", "h-[43px] bg-white"], ["G-code Gener...", "h-[64px]"], ["3D CONTENTCENT...", "h-[79px]"], ["HomeB ...", "h-[42px]"]].map(([t, c]) => (
          <button key={t} className={clsx("flex w-full items-center justify-center overflow-hidden border-b border-[#d8d8d8]", c)}>
            <span className="rotate-180 whitespace-nowrap [writing-mode:vertical-rl]">{t}</span>
          </button>
        ))}
      </nav>
    </aside>
  );
}

function CommandWindow() {
  return (
    <section className="shrink-0 bg-white">
      <div className="flex h-4 items-center justify-between border-t-2 border-[#8f8f8f] bg-[#c1c1c1] pr-0.5 pl-[3px] text-[8px] font-bold">
        Command Window
        <span className="flex gap-1"><WindowGlyph kind="restore" /><WindowGlyph kind="close" /></span>
      </div>
      <div className="h-[45px] border-y border-l border-[#bcbcbc] pt-[13px] pl-[3px]">: Opening "R2007" drawing file</div>
      <label className="flex h-[10px] items-center pl-[3px]">:<input aria-label="Command" className="h-full flex-1 pl-1 outline-none" /></label>
    </section>
  );
}

const toggles: [string, boolean][] = [
  ["stFilter", false], ["stSnap", false], ["stGrid", false], ["stOrtho", true], ["stPolar", false],
  ["stEsnap", true], ["stTrack", true], ["stCycle", true], ["stUcs", true],
];

function StatusBar() {
  return (
    <footer className="flex h-5 shrink-0 items-center bg-[#f0f0f0] pl-[2px] text-[7px]">
      <span className="w-[266px] shrink-0">DraftSight 2020 x64</span>
      <div className="flex gap-[5px] text-[8px]">
        {toggles.map(([name, on]) => (
          <button key={name} aria-label={name} aria-pressed={on} className={clsx("flex size-4 items-center justify-center border", on ? "border-[#3f8fd0] bg-[#d3e9fa]" : "border-[#c4c4c4] bg-[#e6e6e6]")}>
            <Icon name={name} className="size-3" />
          </button>
        ))}
        <button className="h-[15px] w-[53px] border border-[#3f8fd0] bg-[#d3e9fa] whitespace-nowrap">Dynamic CCS</button>
        <button className="flex h-[15px] w-[60px] items-center justify-between border border-[#c4c4c4] bg-[#e3e3e3] px-[2px]">
          Annotation
          <svg viewBox="0 0 8 5" className="h-[5px] w-2" aria-hidden="true"><path d="M0 0h8L4 5z" fill="#111" /></svg>
        </button>
      </div>
      <span className="pl-1">(1:1)</span>
      <span className="pl-[5px]">(286.94517512,178.47099017,0)</span>
    </footer>
  );
}

export default function App() {
  return (
    <div className="flex min-h-screen flex-col bg-[#f0f0f0] font-['Lato','Open_Sans',sans-serif] text-[8px] leading-[10px] text-[#222]">
      <Header />
      <Ribbon />
      <main className="flex flex-1">
        <div className="flex min-w-0 flex-1 flex-col border-r-2 border-[#f0f0f0]">
          <DocTabs />
          <Drawing />
          <SheetTabs />
        </div>
        <PropertiesPanel />
      </main>
      <CommandWindow />
      <StatusBar />
    </div>
  );
}
